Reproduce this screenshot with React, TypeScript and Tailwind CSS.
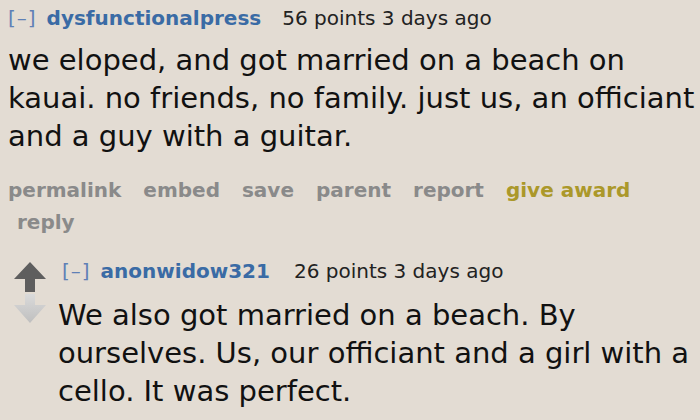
export default function App() {
  const font = { fontFamily: '"DejaVu Sans", Verdana, sans-serif' };
  return (
    <div className="w-[700px] h-[420px] overflow-hidden bg-[#e3dcd3] text-[#111]" style={font}>
      <div className="pl-2 pt-[4px]">
        <div className="flex items-baseline text-[20px] leading-[28px] whitespace-nowrap">
          <span className="text-[#5f80b6] tracking-[1px]">[–]</span>
          <span className="ml-[10px] font-bold text-[#3a6ba5]">dysfunctionalpress</span>
          <span className="ml-[21px] text-[#222]">56 points 3 days ago</span>
        </div>
        <p className="mt-[9px] text-[29px] leading-[38px] whitespace-nowrap">
          <span className="block">we eloped, and got married on a beach on</span>
          <span className="block">kauai. no friends, no family. just us, an officiant</span>
          <span className="block">and a guy with a guitar.</span>
        </p>
        <ul className="mt-[19px] flex flex-wrap text-[20px] font-bold leading-[32px] text-[#8a8a8a]">
          <li className="mr-[22px]">permalink</li>
          <li className="mr-[22px]">embed</li>
          <li className="mr-[22px]">save</li>
          <li className="mr-[22px]">parent</li>
          <li className="mr-[22px]">report</li>
          <li className="mr-[22px] text-[#ab982a]">give award</li>
          <li className="pl-[9px]">reply</li>
        </ul>
      </div>
      <div className="flex mt-[19px] pl-[14px]">
        <div className="flex flex-col w-[32px] pt-[5px]">
          <svg width="32" height="30" viewBox="0 0 32 30">
            <path d="M16 0 L32 17 L21 17 L21 30 L11 30 L11 17 L0 17 Z" fill="#5e5e5e" />
          </svg>
          <svg width="32" height="29" viewBox="0 0 32 29" className="mt-[2px]">
            <defs>
              <linearGradient id="dg" x1="0" y1="0" x2="0" y2="1">
                <stop offset="0" stopColor="#dadada" />
                <stop offset="1" stopColor="#bfbfbf" />
              </linearGradient>
            </defs>
            <path d="M11 0 L21 0 L21 11 L32 11 L16 29 L0 11 L11 11 Z" fill="url(#dg)" />
          </svg>
        </div>
        <div className="ml-[12px]">
          <div className="flex items-baseline text-[20px] leading-[28px] pl-[4px] whitespace-nowrap">
            <span className="text-[#5f80b6] tracking-[1px]">[–]</span>
            <span className="ml-[10px] font-bold text-[#3a6ba5]">anonwidow321</span>
            <span className="ml-[24px] text-[#222]">26 points 3 days ago</span>
          </div>
          <p className="mt-[11px] text-[29px] leading-[38px] whitespace-nowrap">
            <span className="block">We also got married on a beach. By</span>
            <span className="block">ourselves. Us, our officiant and a girl with a</span>
            <span className="block">cello. It was perfect.</span>
          </p>
        </div>
      </div>
    </div>
  );
}
